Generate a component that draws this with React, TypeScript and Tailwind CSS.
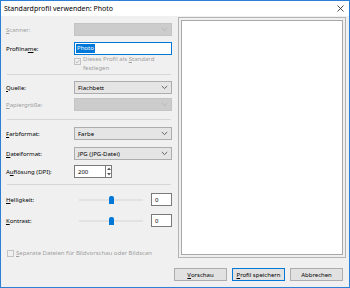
import React from 'react';

const Chevron = ({ disabled }: { disabled?: boolean }) => (
  <svg width="7" height="5" viewBox="0 0 7 5" className="shrink-0">
    <path d="M0.8 1 L3.5 3.6 L6.2 1" fill="none" stroke={disabled ? '#b4b4b4' : '#555'} strokeWidth="0.9" />
  </svg>
);

const Dropdown = ({ value, disabled }: { value?: string; disabled?: boolean }) => (
  <div
    className={`w-[98px] h-[13px] flex items-center justify-between pl-[3px] pr-[3px] border ${
      disabled ? 'bg-[#cccccc] border-[#c4c4c4]' : 'bg-[#e5e5e5] border-[#adadad]'
    }`}
  >
    <span>{value}</span>
    <Chevron disabled={disabled} />
  </div>
);

const Label = ({ children, disabled }: { children: React.ReactNode; disabled?: boolean }) => (
  <div className={`w-[68px] shrink-0 ${disabled ? 'text-[#a0a0a0]' : 'text-black'}`}>{children}</div>
);

const Key = ({ children }: { children: React.ReactNode }) => (
  <span className="underline underline-offset-[1px] decoration-[0.5px]">{children}</span>
);

const Separator = () => <div className="h-px bg-[#d7d7d7] mr-[1px] ml-[1px]" />;

const Slider = () => (
  <div className="ml-[5px] w-[64px] h-[13px] relative flex items-center">
    <div className="w-full h-[2px] bg-[#e2e2e2]" />
    <div className="absolute left-[30px] top-[3px] w-[5px] h-[8px] bg-[#0078d7] rounded-t-[2px]" />
  </div>
);

const ValueBox = () => (
  <div className="ml-[8px] w-[21px] h-[13px] bg-white border border-[#7a7a7a] flex items-center pl-[3px]">0</div>
);

const Button = ({ children, primary }: { children: React.ReactNode; primary?: boolean }) => (
  <div
    className={`w-[53px] h-[13px] flex items-center justify-center whitespace-nowrap bg-[#e1e1e1] border ${
      primary ? 'border-[#0078d7]' : 'border-[#adadad]'
    }`}
  >
    {children}
  </div>
);

export default function App() {
  return (
    <div className="w-[350px] h-[288px] border border-[#2b7fd4] bg-[#f0f0f0] flex flex-col overflow-hidden text-[6px] leading-[8px] text-black font-['Noto_Sans',sans-serif]">
      <div className="h-[15px] shrink-0 bg-white flex items-center justify-between pl-[3px] pr-[5px] text-[7px]">
        <span>Standardprofil verwenden: Photo</span>
        <svg width="7" height="7" viewBox="0 0 7 7">
          <path d="M0.5 0.5 L6.5 6.5 M6.5 0.5 L0.5 6.5" stroke="#333" strokeWidth="0.9" />
        </svg>
      </div>

      <div className="flex flex-1 min-h-0">
        <div className="w-[172px] shrink-0 pl-[5px] pr-[1px] flex flex-col">
          <div className="mt-[7px] flex items-center h-[13px]">
            <Label disabled>
              <Key>S</Key>canner:
            </Label>
            <Dropdown disabled />
          </div>

          <div className="mt-[6px] flex items-center h-[13px]">
            <Label>
              Profilna<Key>m</Key>e:
            </Label>
            <div className="w-[98px] h-[13px] bg-white border border-[#0078d7] flex items-center pl-[1px]">
              <span className="bg-[#0078d7] text-white px-[1px] leading-[9px]">Photo</span>
            </div>
          </div>

          <div className="flex pl-[68px] text-[#a0a0a0]">
            <div className="mt-[3px] w-[7px] h-[7px] border border-[#c4c4c4] bg-[#f0f0f0] flex items-center justify-center shrink-0">
              <svg width="5" height="5" viewBox="0 0 5 5">
                <path d="M0.5 2.6 L2 4 L4.6 0.8" fill="none" stroke="#b0b0b0" strokeWidth="0.8" />
              </svg>
            </div>
            <div className="ml-[2px] leading-[8.5px]">
              <div className="whitespace-nowrap">
                Dieses Profil als <Key>S</Key>tandard
              </div>
              <div>festlegen</div>
            </div>
          </div>

          <div className="mt-[2px]">
            <Separator />
          </div>

          <div className="mt-[6px] flex items-center h-[13px]">
            <Label>
              <Key>Q</Key>uelle:
            </Label>
            <Dropdown value="Flachbett" />
          </div>

          <div className="mt-[4px] flex items-center h-[13px]">
            <Label disabled>
              <Key>P</Key>apiergröße:
            </Label>
            <Dropdown disabled />
          </div>

          <div className="mt-[8px]">
            <Separator />
          </div>

          <div className="mt-[7px] flex items-center h-[13px]">
            <Label>
              <Key>F</Key>arbformat:
            </Label>
            <Dropdown value="Farbe" />
          </div>

          <div className="mt-[7px] flex items-center h-[13px]">
            <Label>
              <Key>D</Key>ateiformat:
            </Label>
            <Dropdown value="JPG (JPG-Datei)" />
          </div>

          <div className="mt-[5px] flex items-center h-[13px]">
            <Label>
              A<Key>u</Key>flösung (DPI):
            </Label>
            <div className="flex h-[13px]">
              <div className="w-[31px] h-[13px] bg-white border border-[#7a7a7a] border-r-0 flex items-center pl-[3px]">200</div>
              <div className="w-[7px] h-[13px] bg-white border border-[#7a7a7a] flex flex-col items-center justify-around">
                <svg width="4" height="3" viewBox="0 0 4 3">
                  <path d="M0 3 L2 0.5 L4 3 Z" fill="#555" />
                </svg>
                <svg width="4" height="3" viewBox="0 0 4 3">
                  <path d="M0 0 L2 2.5 L4 0 Z" fill="#555" />
                </svg>
              </div>
            </div>
          </div>

          <div className="mt-[6px]">
            <Separator />
          </div>

          <div className="mt-[8px] flex items-center h-[13px]">
            <Label>
              <Key>H</Key>elligkeit:
            </Label>
            <Slider />
            <ValueBox />
          </div>

          <div className="mt-[8px] flex items-center h-[13px]">
            <Label>
              <Key>K</Key>ontrast:
            </Label>
            <Slider />
            <ValueBox />
          </div>

          <div className="mt-[22px] flex items-center pl-[1px] text-[#a0a0a0]">
            <div className="w-[7px] h-[7px] border border-[#c4c4c4] bg-[#f0f0f0] shrink-0" />
            <span className="ml-[2px] whitespace-nowrap">
              <Key>S</Key>eparate Dateien für Bildvorschau oder Bildscan
            </span>
          </div>
        </div>

        <div className="ml-[5px] mt-[1px] w-[168px] h-[241px] border border-[#b4b4b4] p-[2px] bg-[#f0f0f0]">
          <div className="w-full h-full border border-[#a8a8a8] bg-white" />
        </div>
      </div>

      <div className="shrink-0 flex justify-end gap-[5px] pr-[6px] pb-[6px]">
        <Button>
          <Key>V</Key>orschau
        </Button>
        <Button primary>
          <Key>P</Key>rofil speichern
        </Button>
        <Button>Abbrechen</Button>
      </div>
    </div>
  );
}
